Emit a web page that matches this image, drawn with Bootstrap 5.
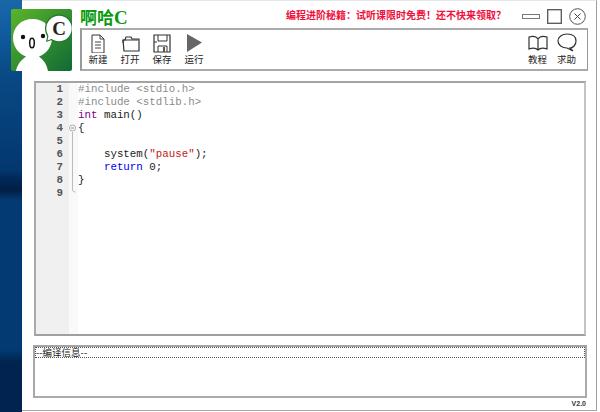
<!DOCTYPE html>
<html lang="zh"><head><meta charset="utf-8"><title>啊哈C</title>
<link href="https://cdn.jsdelivr.net/npm/bootstrap@5.3.0/dist/css/bootstrap.min.css" rel="stylesheet">
<style>
html,body{height:412px;overflow:hidden}
body{background:#fff linear-gradient(180deg,#1a67a8 0,#0f5da0 30px,#0a4a86 70px,#03376f 170px,#012a5c 177px,#011e45 190px,#033a74 200px,#033a72 350px,#01234f 362px,#01234f 412px) no-repeat 0 0/22px 412px;font-family:"Liberation Sans","Noto Sans CJK SC",sans-serif;color:#222;margin:0}
.shell{margin-left:22px;width:575px;height:411px;background:#fff;border-right:1px solid #9aa0a0;border-bottom:1px solid #a8a8a8;border-top:1px solid #e4e8ea;padding-top:7px;box-sizing:border-box}
.topzone{height:63px}
.appmark{width:61px;height:62px;margin:1px 0 0 -11px;flex:none}
.sidecol{margin-left:8px;width:508px}
.apptitle{font:bold 17px/18px "Noto Sans CJK SC",serif;color:#0a9a10;height:20px;width:48px;white-space:nowrap;flex:none}
.apptitle b{font:bold 19px/18px "Liberation Serif",serif}
.promo{font:bold 10px/12px "Noto Sans CJK SC",sans-serif;color:#f0103c;margin-left:158px;width:222px;white-space:nowrap;padding-top:1px;flex:none}
.winctl{margin-left:14px;gap:7px}
.toolbar{height:43px;border:1px solid #bbb;border-top:2px solid #aaa;border-left:2px solid #999;border-bottom:2px solid #aaa;border-right:1px solid #999;padding:2px 0 0 0}
.toolitem{width:32px;text-align:center;font:9.5px/12px "Noto Sans CJK SC",sans-serif;color:#222}
.toolitem svg{display:block;margin:0 auto;height:21px;width:24px}
.toolitem.tight{width:29px}
.toolitem.endtool{margin-right:6px}
.codebox{margin:10px 0 0 12px;width:552px;height:255px;border:1px solid #aaa;border-top:2px solid #a4a4a4;border-left:2px solid #aaa;border-bottom:2px solid #a0a0a0;border-right:2px solid #c4c4c4}
.gutter{width:33px;background:#f0f0f0;font:bold 10.8px/13px "Liberation Mono",monospace;color:#555;text-align:right;padding:0 6px 0 0;flex:none}
.foldzone{width:9px;background:#f9f9f9;flex:none}
.foldzone svg{display:block}
.codetext{font:10.8px/13px "Liberation Mono",monospace;color:#222;background:#fff}
.codeline{height:13px;white-space:pre}
.kwp{color:#8c8c8c}.kwt{color:#80008a}.kwr{color:#0000f0}.kws{color:#c01818}
.msgbox{margin:9px 0 0 11px;width:554px;height:53px;border:1px solid #aaa;border-left:2px solid #a8a8a8;border-bottom:2px solid #aaa;border-top:2px solid #a4a4a4;border-right:2px solid #aaa}
.msghead{height:11px;border:1px dotted #555;font:9.5px/9px "Noto Sans CJK SC",sans-serif;color:#222;white-space:nowrap;background:#fff}
.verlabel{font:bold 7px/9px "Liberation Sans",sans-serif;color:#333;text-align:right;padding-right:10px;margin-top:1px}
</style></head>
<body>
<div class="shell">
  <div class="topzone d-flex">
    <svg class="appmark" viewBox="0 0 61 62" role="img" aria-label="logo">
      <defs><linearGradient id="lg" x1="0" y1="0" x2="1" y2="1"><stop offset="0" stop-color="#5cb52a"/><stop offset="1" stop-color="#0f6a35"/></linearGradient></defs>
      <rect width="61" height="62" rx="2" fill="url(#lg)"/>
      <path d="M5 62 C6 56 10 51 15 47.500 C7 44.500 2 37 2 29 C2 18 10 10 21.500 10 C33 10 41 18 41 29 C41 37 36 44.500 28 47.500 C33 51 36 56 37 62Z" fill="#fff"/>
      <circle cx="12" cy="28" r="2.200" fill="#111"/><circle cx="32" cy="27" r="2.200" fill="#111"/>
      <ellipse cx="21" cy="34" rx="2.300" ry="4.800" fill="#fff" stroke="#111" stroke-width="1.500"/>
      <circle cx="48" cy="19.500" r="14" fill="#1f7a2a"/>
      <path d="M35 33 L37 24 L44 30Z" fill="#1f7a2a"/>
      <circle cx="48" cy="19.500" r="12.700" fill="#fff"/>
      <path d="M36.500 31.500 L38 24 L43 29Z" fill="#fff"/>
      <text x="48" y="26" text-anchor="middle" font-family="Liberation Serif" font-weight="700" font-size="19" fill="#222">C</text>
    </svg>
    <div class="sidecol">
      <div class="d-flex align-items-start">
        <div class="apptitle">啊哈<b>C</b></div>
        <div class="promo">编程进阶秘籍&#xFF1A;试听课限时免费&#xFF01;还不快来领取&#xFF1F;</div>
        <div class="winctl d-flex align-items-center">
          <svg width="18" height="8" viewBox="0 0 18 8"><rect x=".5" y="1.500" width="17" height="4" fill="#fff" stroke="#777"/></svg>
          <svg width="15" height="15" viewBox="0 0 15 15"><rect x=".7" y=".7" width="13.600" height="13.600" fill="#fff" stroke="#555" stroke-width="1.300"/></svg>
          <svg width="17" height="17" viewBox="0 0 17 17"><circle cx="8.500" cy="8.500" r="7.800" fill="#fff" stroke="#555"/><path d="M5.500 5.500l6 6M11.500 5.500l-6 6" stroke="#444" fill="none"/></svg>
        </div>
      </div>
      <div class="toolbar d-flex justify-content-between">
        <div class="d-flex">
          <div class="toolitem"><svg viewBox="0 0 24 21"><path d="M6 3h8l4 4v14H6z" fill="#fff" stroke="#333"/><path d="M14 3v4h4M9 10h6M9 13h6M9 16h6" fill="none" stroke="#444"/></svg>新建</div>
          <div class="toolitem"><svg viewBox="0 0 24 21"><path d="M5 8h2l1-3h5l1 2h7v12H6z" fill="#fff" stroke="#333" stroke-width="1.200"/><path d="M5 8v3M5 8h15" fill="none" stroke="#333"/></svg>打开</div>
          <div class="toolitem"><svg viewBox="0 0 24 21"><path d="M4 3h16v17H4z" fill="#fff" stroke="#333" stroke-width="1.200"/><path d="M8 3v6h9V3M8 20v-6h9v6M4 10h3" fill="none" stroke="#333"/><path d="M13 15h2v5h-2z" fill="#555"/></svg>保存</div>
          <div class="toolitem"><svg viewBox="0 0 24 21"><path d="M5 2L20 10.500 5 20z" fill="#666"/></svg>运行</div>
        </div>
        <div class="d-flex">
          <div class="toolitem tight"><svg viewBox="0 0 24 21"><path d="M12 7C10 4 6 4 3 5v12c3-1 7-1 9 1 2-2 6-2 9-1V5c-3-1-7-1-9 2zM12 7v11" fill="#fff" stroke="#333" stroke-width="1.200"/></svg>教程</div>
          <div class="toolitem tight endtool"><svg viewBox="0 0 24 21"><path d="M12 2c6 0 9 3 9 7 0 4-3 7-6 7l3 3-6-3C7 16 3 13 3 9c0-4 4-7 9-7z" fill="#fff" stroke="#333" stroke-width="1.200"/></svg>求助</div>
        </div>
      </div>
    </div>
  </div>
  <div class="codebox d-flex">
    <div class="gutter"><div class="codeline">1</div><div class="codeline">2</div><div class="codeline">3</div><div class="codeline">4</div><div class="codeline">5</div><div class="codeline">6</div><div class="codeline">7</div><div class="codeline">8</div><div class="codeline">9</div></div>
    <div class="foldzone"><svg width="9" height="120" viewBox="0 0 9 120"><circle cx="3.500" cy="45" r="3" fill="#fff" stroke="#aaa"/><path d="M2 45h3" stroke="#888"/><path d="M3.500 49V107q0 2 3 2" fill="none" stroke="#bbb"/></svg></div>
    <div class="codetext flex-grow-1">
      <div class="codeline kwp">#include &lt;stdio.h&gt;</div>
      <div class="codeline kwp">#include &lt;stdlib.h&gt;</div>
      <div class="codeline"><span class="kwt">int</span> main()</div>
      <div class="codeline">{</div>
      <div class="codeline"></div>
      <div class="codeline">    system(<span class="kws">"pause"</span>);</div>
      <div class="codeline">    <span class="kwr">return</span> 0;</div>
      <div class="codeline">}</div>
    </div>
  </div>
  <div class="msgbox"><div class="msghead">--编译信息--</div></div>
  <div class="verlabel">V2.0</div>
</div>
</body></html>
